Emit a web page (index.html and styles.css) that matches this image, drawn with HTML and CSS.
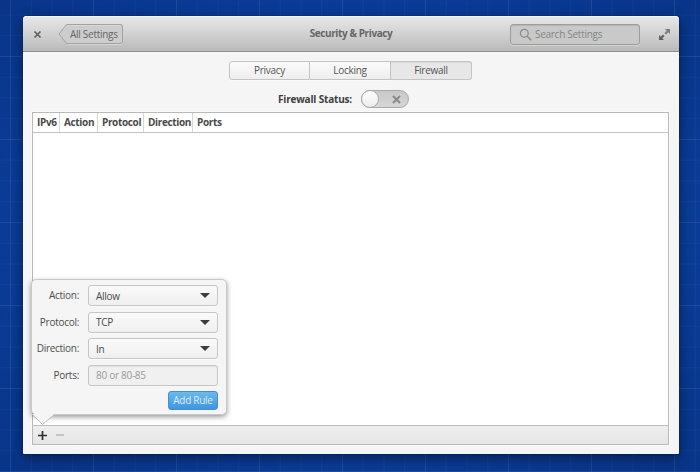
FILE: index.html
```html
<!DOCTYPE html>
<html lang="en">
<head>
<meta charset="utf-8">
<title>Security &amp; Privacy</title>
<link rel="stylesheet" href="styles.css">
</head>
<body>
<div class="window">
  <header class="titlebar">
    <button class="icon-btn close-btn" aria-label="Close">
      <svg width="9" height="9" viewBox="0 0 9 9"><path d="M1.500 1.500l6 6M7.500 1.500l-6 6" stroke="#5f5f5f" stroke-width="1.700" fill="none"/></svg>
    </button>
    <div class="back-btn">
      <svg class="back-arrow" width="11" height="20" viewBox="0 0 11 20"><path d="M10.500 .5H8.500L1 10l7.500 9.500h2" fill="#cdcdcd" stroke="#a3a3a3"/></svg>
      <span class="back-label">All Settings</span>
    </div>
    <div class="title">Security &amp; Privacy</div>
    <div class="search">
      <svg width="13" height="13" viewBox="0 0 13 13"><circle cx="5.300" cy="5.300" r="3.900" fill="none" stroke="#8a8a8a" stroke-width="1.200"/><path d="M8.200 8.200l4 4" stroke="#8a8a8a" stroke-width="1.600"/></svg>
      <span>Search Settings</span>
    </div>
    <button class="icon-btn expand-btn" aria-label="Maximize">
      <svg width="11" height="11" viewBox="0 0 11 11"><path d="M6 0h5v5L9.300 3.300 7 5.600 5.400 4 7.700 1.700z" fill="#7d7d7d"/><path d="M5 11H0V6l1.700 1.700L4 5.400 5.600 7 3.300 9.300z" fill="#5f5f5f"/></svg>
    </button>
  </header>

  <main class="content">
    <div class="tabs">
      <div class="tab tab-privacy">Privacy</div>
      <div class="tab tab-locking">Locking</div>
      <div class="tab tab-firewall active">Firewall</div>
    </div>
    <div class="status">
      <span class="status-label">Firewall Status:</span>
      <div class="switch">
        <span class="knob"></span>
        <svg class="switch-x" width="9" height="9" viewBox="0 0 9 9"><path d="M1 1l7 7M8 1l-7 7" stroke="#8a8a8a" stroke-width="2.100" fill="none"/></svg>
      </div>
    </div>

    <section class="table-frame">
      <div class="thead">
        <div class="th th-ipv6">IPv6</div>
        <div class="th th-action">Action</div>
        <div class="th th-protocol">Protocol</div>
        <div class="th th-direction">Direction</div>
        <div class="th th-ports">Ports</div>
      </div>
      <div class="tbody"></div>
      <div class="toolbar">
        <svg class="tool" width="9" height="9" viewBox="0 0 9 9"><path d="M4.500 0v9M0 4.500h9" stroke="#2e2e2e" stroke-width="1.700"/></svg>
        <svg class="tool" width="10" height="10" viewBox="0 0 10 10"><path d="M1 5h8" stroke="#b4b4b4" stroke-width="1.400"/></svg>
      </div>
    </section>
  </main>

  <form class="popover">
    <label class="lbl">Action:</label>
    <div class="select"><span>Allow</span><i class="caret"></i></div>
    <label class="lbl">Protocol:</label>
    <div class="select"><span>TCP</span><i class="caret"></i></div>
    <label class="lbl">Direction:</label>
    <div class="select"><span>In</span><i class="caret"></i></div>
    <label class="lbl">Ports:</label>
    <div class="entry">80 or 80-85</div>
    <div class="actions"><div class="add-btn">Add Rule</div></div>
    <svg class="pointer" width="24" height="12" viewBox="0 0 24 12"><path d="M0 0L10.500 10.500 23 0" fill="#f5f5f5" stroke="#bdbdbd"/><path d="M1 0h21v-1H1z" fill="#f5f5f5"/></svg>
  </form>
</div>
</body>
</html>
```
FILE: styles.css
```css
* { box-sizing: border-box; }
html, body { margin: 0; height: 100%; }
body {
  width: 700px;
  height: 472px;
  overflow: hidden;
  padding: 16px 21px 18px 23px;
  font-family: "Open Sans", "Noto Sans", sans-serif;
  font-size: 10px;
  letter-spacing: -.28px;
  color: #4d4d4d;
  background-color: #0b3b94;
  background-image:
    linear-gradient(rgba(255,255,255,.055) 1px, transparent 1px),
    linear-gradient(90deg, rgba(255,255,255,.055) 1px, transparent 1px),
    linear-gradient(rgba(255,255,255,.03) 1px, transparent 1px),
    linear-gradient(90deg, rgba(255,255,255,.03) 1px, transparent 1px),
    radial-gradient(ellipse at 50% 50%, #0c48ae 0%, #0a3c98 65%, #093488 100%);
  background-size: 83px 83px, 83px 83px, 20.750px 20.750px, 20.750px 20.750px, 100% 100%;
  background-position: 10px 56px, 10px 56px, 10px 56px, 10px 56px, 0 0;
}
.window {
  position: relative;
  width: 656px;
  height: 438px;
  background: #f5f5f5;
  border-radius: 4px 4px 1px 1px;
  box-shadow: 0 4px 14px rgba(0,0,0,.45), 0 0 2px rgba(0,0,0,.4);
  display: flex;
  flex-direction: column;
}
.titlebar {
  height: 36px;
  flex: none;
  display: flex;
  align-items: center;
  position: relative;
  padding: 1px 9px 0 10px;
  background: linear-gradient(#e9e9e9, #bababa);
  border-bottom: 1px solid #8f8f8f;
  border-radius: 4px 4px 0 0;
  box-shadow: inset 0 1px 0 #f6f6f6;
}
.icon-btn {
  border: 0;
  padding: 0;
  background: none;
  display: flex;
}
.back-btn {
  margin-left: 16px;
  display: flex;
  height: 20px;
}
.back-arrow { flex: none; }
.back-label {
  width: 55px;
  height: 20px;
  margin-left: -1px;
  padding-left: 2px;
  line-height: 18px;
  color: #666;
  border: 1px solid #a3a3a3;
  border-left: 0;
  border-radius: 0 3px 3px 0;
  background: #cdcdcd;
  box-shadow: inset 0 1px 0 rgba(255,255,255,.25), 0 1px 0 rgba(255,255,255,.3);
  white-space: nowrap;
}
.title {
  position: absolute;
  left: 0;
  right: 0;
  top: 8px;
  text-align: center;
  font-weight: 700;
  letter-spacing: -.4px;
  color: #666;
  line-height: 18px;
}
.search {
  margin-left: auto;
  width: 130px;
  height: 21px;
  display: flex;
  align-items: center;
  gap: 3px;
  padding: 0 0 0 8px;
  color: #858585;
  border: 1px solid #9d9d9d;
  border-radius: 3px;
  background: #c9c9c9;
  box-shadow: inset 0 1px 1px rgba(0,0,0,.1), 0 1px 0 rgba(255,255,255,.3);
  white-space: nowrap;
}
.expand-btn { margin-left: 19px; }
.content {
  flex: 1;
  display: flex;
  flex-direction: column;
  align-items: center;
  padding: 9px 10px 9px 9px;
  min-height: 0;
}
.tabs {
  display: flex;
  height: 19px;
  flex: none;
}
.tab {
  height: 19px;
  line-height: 17px;
  text-align: center;
  border: 1px solid #c4c4c4;
  border-left: 0;
  background: linear-gradient(#fbfbfb, #eeeeee);
  color: #555;
  box-shadow: 0 1px 0 rgba(255,255,255,.7);
}
.tab-privacy { width: 81px; border-left: 1px solid #c4c4c4; border-radius: 3px 0 0 3px; }
.tab-locking { width: 81px; }
.tab-firewall { width: 81px; border-radius: 0 3px 3px 0; }
.tab.active {
  background: #e7e7e7;
  box-shadow: inset 0 1px 1px rgba(0,0,0,.06);
}
.status {
  display: flex;
  align-items: center;
  justify-content: center;
  gap: 9px;
  height: 18px;
  margin: 10px 14px 0 0;
  flex: none;
}
.status-label {
  font-weight: 700;
  letter-spacing: -.18px;
  color: #404040;
}
.switch {
  position: relative;
  width: 48px;
  height: 18px;
  border: 1px solid #a9a9a9;
  border-radius: 9px;
  background: linear-gradient(#c8c8c8, #d6d6d6);
}
.knob {
  position: absolute;
  left: -1px;
  top: -1px;
  width: 18px;
  height: 18px;
  border: 1px solid #a9a9a9;
  border-radius: 50%;
  background: linear-gradient(#fff, #ececec);
}
.switch-x {
  position: absolute;
  right: 7px;
  top: 4px;
}
.table-frame {
  width: 100%;
  flex: 1;
  min-height: 0;
  margin-top: 4px;
  display: flex;
  flex-direction: column;
  border: 1px solid #b9b9b9;
  background: #fff;
  box-shadow: 0 0 0 1px rgba(255,255,255,.5);
}
.thead {
  display: flex;
  height: 20px;
  flex: none;
  border-bottom: 1px solid #c2c2c2;
  box-shadow: 0 1px 0 #f0f0f0;
}
.th {
  padding-left: 4px;
  font-weight: 700;
  letter-spacing: -.35px;
  line-height: 19px;
  color: #4a4a4a;
  border-right: 1px solid #d6d6d6;
  white-space: nowrap;
}
.th-ipv6 { width: 27px; }
.th-action { width: 38px; }
.th-protocol { width: 46px; }
.th-direction { width: 49px; }
.th-ports { flex: 1; border-right: 0; }
.tbody { flex: 1; background: #fff; }
.toolbar {
  height: 19px;
  flex: none;
  display: flex;
  align-items: center;
  gap: 8px;
  padding: 0 0 0 5px;
  border-top: 1px solid #bdbdbd;
  background: linear-gradient(#eeeeee, #e6e6e6);
}
.popover {
  position: absolute;
  left: 8px;
  top: 263px;
  width: 196px;
  height: 136px;
  display: grid;
  grid-template-columns: 47px 130px;
  grid-auto-rows: 21px;
  column-gap: 9px;
  row-gap: 5.500px;
  padding: 5px 0 0 0;
  background: #f5f5f5;
  border: 1px solid #c9c9c9;
  border-radius: 5px;
  box-shadow: 0 2px 5px rgba(0,0,0,.4);
}
.lbl {
  text-align: right;
  line-height: 21px;
  color: #4d4d4d;
  white-space: nowrap;
}
.select {
  display: flex;
  align-items: center;
  justify-content: space-between;
  padding: 0 7px 0 7px;
  border: 1px solid #c6c6c6;
  border-radius: 3px;
  background: linear-gradient(#fafafa, #efefef);
  color: #4a4a4a;
  box-shadow: 0 1px 0 rgba(255,255,255,.6);
}
.caret {
  width: 0;
  height: 0;
  border-left: 5px solid transparent;
  border-right: 5px solid transparent;
  border-top: 5px solid #3d3d3d;
}
.entry {
  padding-left: 7px;
  line-height: 19px;
  color: #9a9a9a;
  border: 1px solid #c6c6c6;
  border-radius: 3px;
  background: #f0f0f0;
  box-shadow: inset 0 1px 1px rgba(0,0,0,.05);
}
.actions {
  grid-column: 2;
  display: flex;
  justify-content: flex-end;
}
.add-btn {
  width: 50px;
  height: 19px;
  line-height: 17px;
  text-align: center;
  color: #d9edfb;
  border: 1px solid #3f8fd0;
  border-radius: 3px;
  background: linear-gradient(#6db8ee, #3f97dc);
  white-space: nowrap;
}
.pointer {
  position: absolute;
  left: 0;
  top: 134px;
}
```
